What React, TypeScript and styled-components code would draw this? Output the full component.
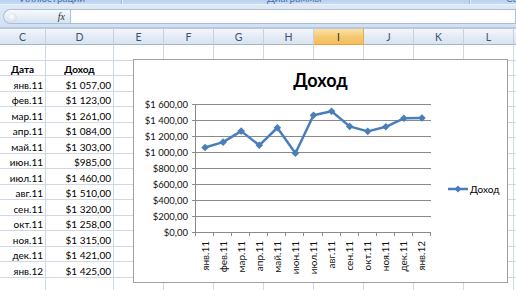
import React from "react";
import styled, { createGlobalStyle } from "styled-components";

const GlobalStyle = createGlobalStyle`
  html, body { margin: 0; padding: 0; background: #ffffff; overflow: hidden; }
  * { box-sizing: border-box; }
`;

const Page = styled.div`
  position: relative;
  width: 516px;
  height: 290px;
  overflow: hidden;
  font-family: Lato, "Noto Sans", sans-serif;
  color: #000;
  background: #fff;
`;

const RibbonStrip = styled.div`
  display: flex;
  height: 5px;
  overflow: hidden;
  background: linear-gradient(#b9d1ee, #c6daf2);
  border-bottom: 1px solid #e8f0fa;
`;

const RibbonGroup = styled.div<{ $w: number; $pad: number }>`
  flex: 0 0 ${(p) => p.$w}px;
  display: flex;
  justify-content: flex-start;
  padding-left: ${(p) => p.$pad}px;
  border-right: 1px solid #9ab8df;
  box-shadow: 1px 0 0 #e6eef9;
  margin-right: 2px;
`;

const RibbonLabel = styled.span`
  margin-top: -8px;
  font-size: 10px;
  line-height: 12px;
  color: #4a72ad;
  white-space: nowrap;
`;

const FormulaArea = styled.div`
  display: flex;
  height: 23px;
  padding: 4px 0 3px 3px;
  background: linear-gradient(#dfe9f5, #d3e0f0);
  border-bottom: 1px solid #b7c9e0;
`;

const NameBox = styled.div`
  flex: 0 0 67px;
  display: flex;
  align-items: center;
  justify-content: flex-end;
  padding-right: 5px;
  border: 1px solid #a9bfd8;
  border-right: none;
  border-radius: 8px 0 0 8px;
  background: linear-gradient(#f7fafd, #d6e2f2);
  position: relative;
`;

const NameDot = styled.span`
  position: absolute;
  left: 4px;
  top: 3px;
  width: 9px;
  height: 9px;
  border-radius: 50%;
  background: radial-gradient(circle at 40% 40%, #ffffff, #c3d1e3);
`;

const Fx = styled.span`
  font-family: "Liberation Serif", serif;
  font-style: italic;
  font-size: 10px;
  color: #333;
`;

const FormulaInput = styled.div`
  flex: 1;
  background: #fff;
  border: 1px solid #a9bfd8;
`;

const Sheet = styled.div`
  display: grid;
  grid-template-columns: 46px 68px repeat(8, 50px) 1fr;
`;

const ColHead = styled.div<{ $sel?: boolean }>`
  height: 17px;
  display: flex;
  align-items: center;
  justify-content: center;
  font-size: 10.5px;
  color: ${(p) => (p.$sel ? "#333" : "#3f526c")};
  background: ${(p) =>
    p.$sel
      ? "linear-gradient(#fbe2a8, #f5c870 55%, #f3bf5e)"
      : "linear-gradient(#f4f7fc, #e3eaf5 55%, #dae3ef)"};
  border-right: 1px solid ${(p) => (p.$sel ? "#f0a94a" : "#c3d1e3")};
  border-bottom: 1px solid ${(p) => (p.$sel ? "#f29b38" : "#9eb6ce")};
  border-top: 1px solid #b7c9e0;
`;

const Cell = styled.div<{ $align?: "left" | "right" | "center"; $bold?: boolean }>`
  height: 15.5px;
  display: flex;
  align-items: flex-end;
  justify-content: ${(p) =>
    p.$align === "right" ? "flex-end" : p.$align === "center" ? "center" : "flex-start"};
  padding: 0 2px 0 2px;
  font-size: 10px;
  line-height: 12px;
  font-weight: ${(p) => (p.$bold ? 700 : 400)};
  white-space: nowrap;
  border-right: 1px solid #d0d7e5;
  border-bottom: 1px solid #d0d7e5;
`;

const ChartBox = styled.div`
  position: absolute;
  left: 133px;
  top: 59px;
  width: 375px;
  height: 224px;
  background: #fff;
  border: 1px solid #a0a0a0;
  display: flex;
  flex-direction: column;
`;

const ChartTitle = styled.div`
  height: 29px;
  padding-top: 11px;
  text-align: center;
  font-size: 18px;
  line-height: 18px;
  font-weight: 700;
`;

const ChartBody = styled.div`
  display: flex;
  flex: 1;
`;

const Legend = styled.div`
  flex: 1;
  display: flex;
  align-items: center;
  padding: 7px 0 0 4px;
`;

const LegendItem = styled.div`
  display: flex;
  align-items: center;
  gap: 2px;
  font-size: 10px;
`;

const cols = ["C", "D", "E", "F", "G", "H", "I", "J", "K", "L", ""];

const data: [string, string, number][] = [
  ["янв.11", "$1 057,00", 1057],
  ["фев.11", "$1 123,00", 1123],
  ["мар.11", "$1 261,00", 1261],
  ["апр.11", "$1 084,00", 1084],
  ["май.11", "$1 303,00", 1303],
  ["июн.11", "$985,00", 985],
  ["июл.11", "$1 460,00", 1460],
  ["авг.11", "$1 510,00", 1510],
  ["сен.11", "$1 320,00", 1320],
  ["окт.11", "$1 258,00", 1258],
  ["ноя.11", "$1 315,00", 1315],
  ["дек.11", "$1 421,00", 1421],
  ["янв.12", "$1 425,00", 1425],
];

const blank = (n: number) => Array.from({ length: n }, (_, i) => <Cell key={"b" + i} />);

const X0 = 196;
const X1 = 431;
const W = (X1 - X0) / 13;
const yFor = (v: number) => 232 - v * 0.08;
const yTicks = [1600, 1400, 1200, 1000, 800, 600, 400, 200, 0];
const fmt = (v: number) =>
  v >= 1000 ? `$${Math.floor(v / 1000)} ${String(v % 1000).padStart(3, "0")},00` : `$${v},00`;

function Plot() {
  const pts = data.map((d, i) => [X0 + (i + 0.5) * W, yFor(d[2])] as const);
  return (
    <svg width={310} height={193} viewBox="134 89 310 193" style={{ display: "block" }}>
      {yTicks.map((v) => {
        const y = Math.round(yFor(v)) + 0.5;
        return (
          <g key={v}>
            <line x1={X0} x2={X1} y1={y} y2={y} stroke="#8a8a8a" strokeWidth={1} />
            <line x1={192} x2={X0} y1={y} y2={y} stroke="#8a8a8a" strokeWidth={1} />
            <text
              x={188}
              y={y}
              dy="0.35em"
              textAnchor="end"
              fontSize={9.5}
              fontFamily="Lato, sans-serif"
              fill="#111"
            >
              {fmt(v)}
            </text>
          </g>
        );
      })}
      <line x1={X0 - 0.5} x2={X0 - 0.5} y1={104} y2={233} stroke="#8a8a8a" />
      {Array.from({ length: 14 }, (_, k) => {
        const x = Math.round(X0 + k * W) - 0.5;
        return <line key={k} x1={x} x2={x} y1={232} y2={236} stroke="#8a8a8a" />;
      })}
      {data.map((d, i) => (
        <text
          key={d[0]}
          transform={`translate(${X0 + (i + 0.5) * W} 241) rotate(-90)`}
          dy="0.35em"
          textAnchor="end"
          fontSize={10}
          fontFamily="Lato, sans-serif"
          fill="#111"
        >
          {d[0]}
        </text>
      ))}
      <polyline
        points={pts.map((p) => p.join(",")).join(" ")}
        fill="none"
        stroke="#4a7ebb"
        strokeWidth={2.5}
        strokeLinejoin="round"
      />
      {pts.map(([x, y], i) => (
        <polygon
          key={i}
          points={`${x},${y - 3.8} ${x + 3.8},${y} ${x},${y + 3.8} ${x - 3.8},${y}`}
          fill="#4a7ebb"
        />
      ))}
    </svg>
  );
}

export default function App() {
  return (
    <>
      <GlobalStyle />
      <Page>
        <RibbonStrip>
          <RibbonGroup $w={122} $pad={20}>
            <RibbonLabel>Иллюстрации</RibbonLabel>
          </RibbonGroup>
          <RibbonGroup $w={346} $pad={143}>
            <RibbonLabel>Диаграммы</RibbonLabel>
          </RibbonGroup>
          <RibbonGroup $w={60} $pad={34}>
            <RibbonLabel>Связи</RibbonLabel>
          </RibbonGroup>
        </RibbonStrip>
        <FormulaArea>
          <NameBox>
            <NameDot />
            <Fx>fx</Fx>
          </NameBox>
          <FormulaInput />
        </FormulaArea>
        <Sheet>
          {cols.map((c, i) => (
            <ColHead key={i} $sel={c === "I"}>
              {c}
            </ColHead>
          ))}
          {blank(11)}
          <Cell $align="center" $bold>
            Дата
          </Cell>
          <Cell $align="center" $bold>
            Доход
          </Cell>
          {blank(9)}
          {data.map((d) => (
            <React.Fragment key={d[0]}>
              <Cell $align="right">{d[0]}</Cell>
              <Cell $align="right">{d[1]}</Cell>
              {blank(9)}
            </React.Fragment>
          ))}
          {blank(11)}
        </Sheet>
        <ChartBox>
          <ChartTitle>Доход</ChartTitle>
          <ChartBody>
            <Plot />
            <Legend>
              <LegendItem>
                <svg width={20} height={8} viewBox="0 0 20 8">
                  <line x1={0} x2={20} y1={4} y2={4} stroke="#4a7ebb" strokeWidth={2.5} />
                  <polygon points="10,0.5 13.5,4 10,7.5 6.5,4" fill="#4a7ebb" />
                </svg>
                Доход
              </LegendItem>
            </Legend>
          </ChartBody>
        </ChartBox>
      </Page>
    </>
  );
}
